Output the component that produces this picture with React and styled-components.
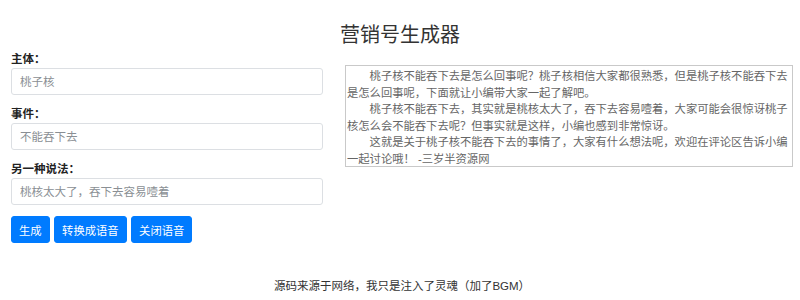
import React from "react";
import styled, { createGlobalStyle } from "styled-components";

const GlobalStyle = createGlobalStyle`
  body {
    margin: 0;
    background: #fff;
    font-family: "Liberation Sans", "Noto Sans CJK SC", sans-serif;
    color: #333;
  }
`;

const Page = styled.div`
  width: 800px;
  height: 300px;
  padding-top: 23px;
  box-sizing: border-box;
  overflow: hidden;
`;

const Title = styled.h1`
  margin: 0;
  text-align: center;
  font-size: 20px;
  line-height: 24px;
  font-weight: 400;
  color: #333;
`;

const Main = styled.div`
  display: grid;
  grid-template-columns: 312px 448px;
  column-gap: 22px;
  padding-left: 11px;
  margin-top: 4px;
`;

const Form = styled.div`
  display: flex;
  flex-direction: column;
`;

const Field = styled.div`
  margin-bottom: 11px;
`;

const Label = styled.label`
  display: block;
  font-size: 11.5px;
  line-height: 16px;
  font-weight: 700;
  color: #222;
  margin-bottom: 1px;
`;

const Input = styled.input`
  display: block;
  width: 100%;
  height: 27px;
  box-sizing: border-box;
  padding: 0 8px;
  border: 1px solid #dcdfe3;
  border-radius: 3px;
  font-family: inherit;
  font-size: 11.5px;
  color: #495057;
  outline: none;

  &::placeholder {
    color: #8a8f94;
  }
`;

const Actions = styled.div`
  display: flex;
  gap: 4.5px;
`;

const Button = styled.button`
  height: 27px;
  padding: 0 7px;
  border: 1px solid #007bff;
  border-radius: 3px;
  background: #007bff;
  color: #fff;
  font-family: inherit;
  font-size: 11.3px;
  cursor: pointer;
`;

const Output = styled.div`
  margin-top: 14px;
  height: 102px;
  box-sizing: border-box;
  padding: 2px 1px 0 1px;
  border: 1px solid #c9c9c9;
  font-size: 11.3px;
  line-height: 16.5px;
  color: #666;
  overflow: hidden;
`;

const Para = styled.p`
  margin: 0;
  text-indent: 2em;
`;

const Footer = styled.div`
  margin-top: 35px;
  text-align: center;
  font-size: 11.5px;
  line-height: 16px;
  color: #333;
  padding-left: 4px;
`;

const paragraphs = [
  "桃子核不能吞下去是怎么回事呢？桃子核相信大家都很熟悉，但是桃子核不能吞下去是怎么回事呢，下面就让小编带大家一起了解吧。",
  "桃子核不能吞下去，其实就是桃核太大了，吞下去容易噎着，大家可能会很惊讶桃子核怎么会不能吞下去呢？但事实就是这样，小编也感到非常惊讶。",
  "这就是关于桃子核不能吞下去的事情了，大家有什么想法呢，欢迎在评论区告诉小编一起讨论哦！ -三岁半资源网",
];

const App = () => {
  return (
    <Page>
      <GlobalStyle />
      <Title>营销号生成器</Title>
      <Main>
        <Form>
          <Field>
            <Label>主体：</Label>
            <Input placeholder="桃子核" />
          </Field>
          <Field>
            <Label>事件：</Label>
            <Input placeholder="不能吞下去" />
          </Field>
          <Field>
            <Label>另一种说法：</Label>
            <Input placeholder="桃核太大了，吞下去容易噎着" />
          </Field>
          <Actions>
            <Button>生成</Button>
            <Button>转换成语音</Button>
            <Button>关闭语音</Button>
          </Actions>
        </Form>
        <Output>
          {paragraphs.map((p) => (
            <Para key={p}>{p}</Para>
          ))}
        </Output>
      </Main>
      <Footer>源码来源于网络，我只是注入了灵魂（加了BGM）</Footer>
    </Page>
  );
};

export default App;
